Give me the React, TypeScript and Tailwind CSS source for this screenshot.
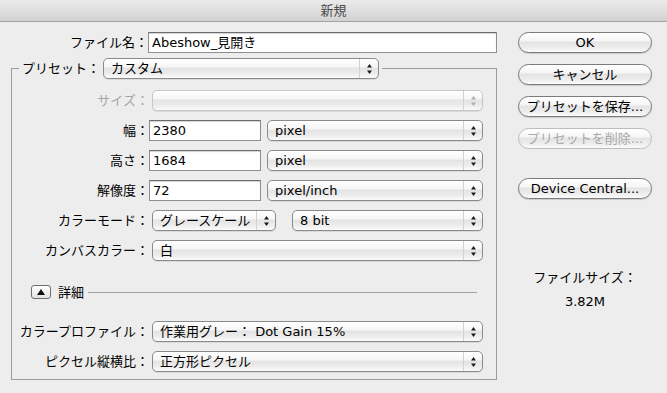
import React from 'react';

const font = 'font-["DejaVu_Sans","Noto_Sans_CJK_JP",sans-serif]';

const aquaBg =
  'bg-[linear-gradient(to_bottom,#ffffff_0%,#f6f6f6_40%,#e4e4e4_50%,#ececec_75%,#fbfbfb_100%)]';

function Arrows({ disabled }: { disabled?: boolean }) {
  return (
    <svg width="5" height="10" viewBox="0 0 5 10">
      <polygon points="2.5,0 5,3.5 0,3.5" fill={disabled ? '#b0b0b0' : '#1c1c1c'} />
      <polygon points="0,6.5 5,6.5 2.5,10" fill={disabled ? '#b0b0b0' : '#1c1c1c'} />
    </svg>
  );
}

function Popup({ value, className, disabled }: { value: string; className: string; disabled?: boolean }) {
  return (
    <div
      className={`flex h-[21px] shrink-0 items-center overflow-hidden rounded-[5px] border ${
        disabled ? 'border-[#c6c6c6] text-[#a8a8a8]' : 'border-[#8a8a8a] text-black'
      } ${aquaBg} shadow-[0_1px_0_rgba(0,0,0,0.08)] ${className}`}
    >
      <span className="min-w-0 flex-1 truncate pl-[7px] text-[13px] leading-none">{value}</span>
      <div className="flex h-full w-[19px] items-center justify-center border-l border-[#d2d2d2]">
        <Arrows disabled={disabled} />
      </div>
    </div>
  );
}

function Field({ value, className }: { value: string; className: string }) {
  return (
    <div
      className={`flex h-[21px] shrink-0 items-center border border-[#8e8e8e] border-t-[#6c6c6c] bg-white pl-[3px] text-[13px] leading-none text-black shadow-[inset_0_1px_1px_rgba(0,0,0,0.18)] ${className}`}
    >
      {value}
    </div>
  );
}

function AquaButton({ label, disabled }: { label: string; disabled?: boolean }) {
  return (
    <div
      className={`flex h-[21px] w-[134px] items-center justify-center rounded-full border ${
        disabled ? 'border-[#bdbdbd] text-[#a9a9a9]' : 'border-[#7b7b7b] text-black shadow-[0_1px_1px_rgba(0,0,0,0.15)]'
      } ${aquaBg} text-[13px] leading-none`}
    >
      {label}
    </div>
  );
}

function Row({ label, children, dim }: { label: string; children: React.ReactNode; dim?: boolean }) {
  return (
    <div className="flex h-[21px] items-center">
      <div className={`w-[137px] shrink-0 text-right text-[13px] leading-none ${dim ? 'text-[#a6a6a6]' : 'text-black'}`}>
        {label}：
      </div>
      {children}
    </div>
  );
}

export default function App() {
  return (
    <div className={`${font} flex h-[393px] w-[667px] flex-col overflow-hidden bg-[#ededed]`}>
      {/* title bar */}
      <div className="flex h-[22px] shrink-0 items-center justify-center border-b border-[#a3a3a3] bg-[linear-gradient(to_bottom,#ebebeb,#d2d2d2)] text-[13px] text-[#4a4a4a]">
        新規
      </div>

      <div className="flex">
        {/* left side */}
        <div className="w-[497px] shrink-0 pt-[10px]">
          <div className="flex h-[21px] items-center">
            <div className="w-[148px] shrink-0 text-right text-[13px] leading-none text-black">ファイル名：</div>
            <Field value="Abeshow_見開き" className="w-[349px]" />
          </div>

          <fieldset className="ml-[11px] mt-[5px] w-[486px] border border-[#9b9b9b] pb-[7px] pt-[11px]">
            <legend className="ml-[7px] flex items-center px-[3px]">
              <span className="text-[13px] leading-none text-black">プリセット：</span>
              <Popup value="カスタム" className="ml-[3px] w-[276px]" />
            </legend>

            <div className="flex flex-col gap-[9px]">
              <Row label="サイズ" dim>
                <Popup value="" className="ml-[3px] w-[331px]" disabled />
              </Row>
              <Row label="幅">
                <Field value="2380" className="w-[112px]" />
                <Popup value="pixel" className="ml-[6px] w-[216px]" />
              </Row>
              <Row label="高さ">
                <Field value="1684" className="w-[112px]" />
                <Popup value="pixel" className="ml-[6px] w-[216px]" />
              </Row>
              <Row label="解像度">
                <Field value="72" className="w-[112px]" />
                <Popup value="pixel/inch" className="ml-[6px] w-[216px]" />
              </Row>
              <Row label="カラーモード">
                <Popup value="グレースケール" className="ml-[3px] w-[124px]" />
                <Popup value="8 bit" className="ml-[16px] w-[191px]" />
              </Row>
              <Row label="カンバスカラー">
                <Popup value="白" className="ml-[3px] w-[331px]" />
              </Row>
            </div>

            {/* disclosure */}
            <div className="mt-[22px] flex h-[18px] items-center pl-[19px] pr-[19px]">
              <div className="flex h-[14px] w-[20px] items-center justify-center rounded-[3px] border border-[#6f6f6f] bg-[linear-gradient(to_bottom,#ffffff,#e2e2e2)]">
                <svg width="8" height="6" viewBox="0 0 8 6">
                  <polygon points="4,0 8,6 0,6" fill="#111" />
                </svg>
              </div>
              <span className="ml-[7px] text-[13px] leading-none text-black">詳細</span>
              <div className="ml-[4px] h-px flex-1 bg-[#a2a2a2]" />
            </div>

            <div className="mt-[20px] flex flex-col gap-[9px]">
              <Row label="カラープロファイル">
                <Popup value="作業用グレー：  Dot Gain 15%" className="ml-[3px] w-[331px]" />
              </Row>
              <Row label="ピクセル縦横比">
                <Popup value="正方形ピクセル" className="ml-[3px] w-[331px]" />
              </Row>
            </div>
          </fieldset>
        </div>

        {/* right side */}
        <div className="ml-[21px] flex w-[134px] flex-col pt-[10px]">
          <div className="flex flex-col gap-[11px]">
            <AquaButton label="OK" />
            <AquaButton label="キャンセル" />
            <AquaButton label="プリセットを保存..." />
            <AquaButton label="プリセットを削除..." disabled />
          </div>
          <div className="mt-[29px]">
            <AquaButton label="Device Central..." />
          </div>
          <div className="mt-[70px] text-center text-[13px] leading-[18px] text-black">ファイルサイズ：</div>
          <div className="mt-[6px] text-center text-[13px] leading-[18px] text-black">3.82M</div>
        </div>
      </div>
    </div>
  );
}
